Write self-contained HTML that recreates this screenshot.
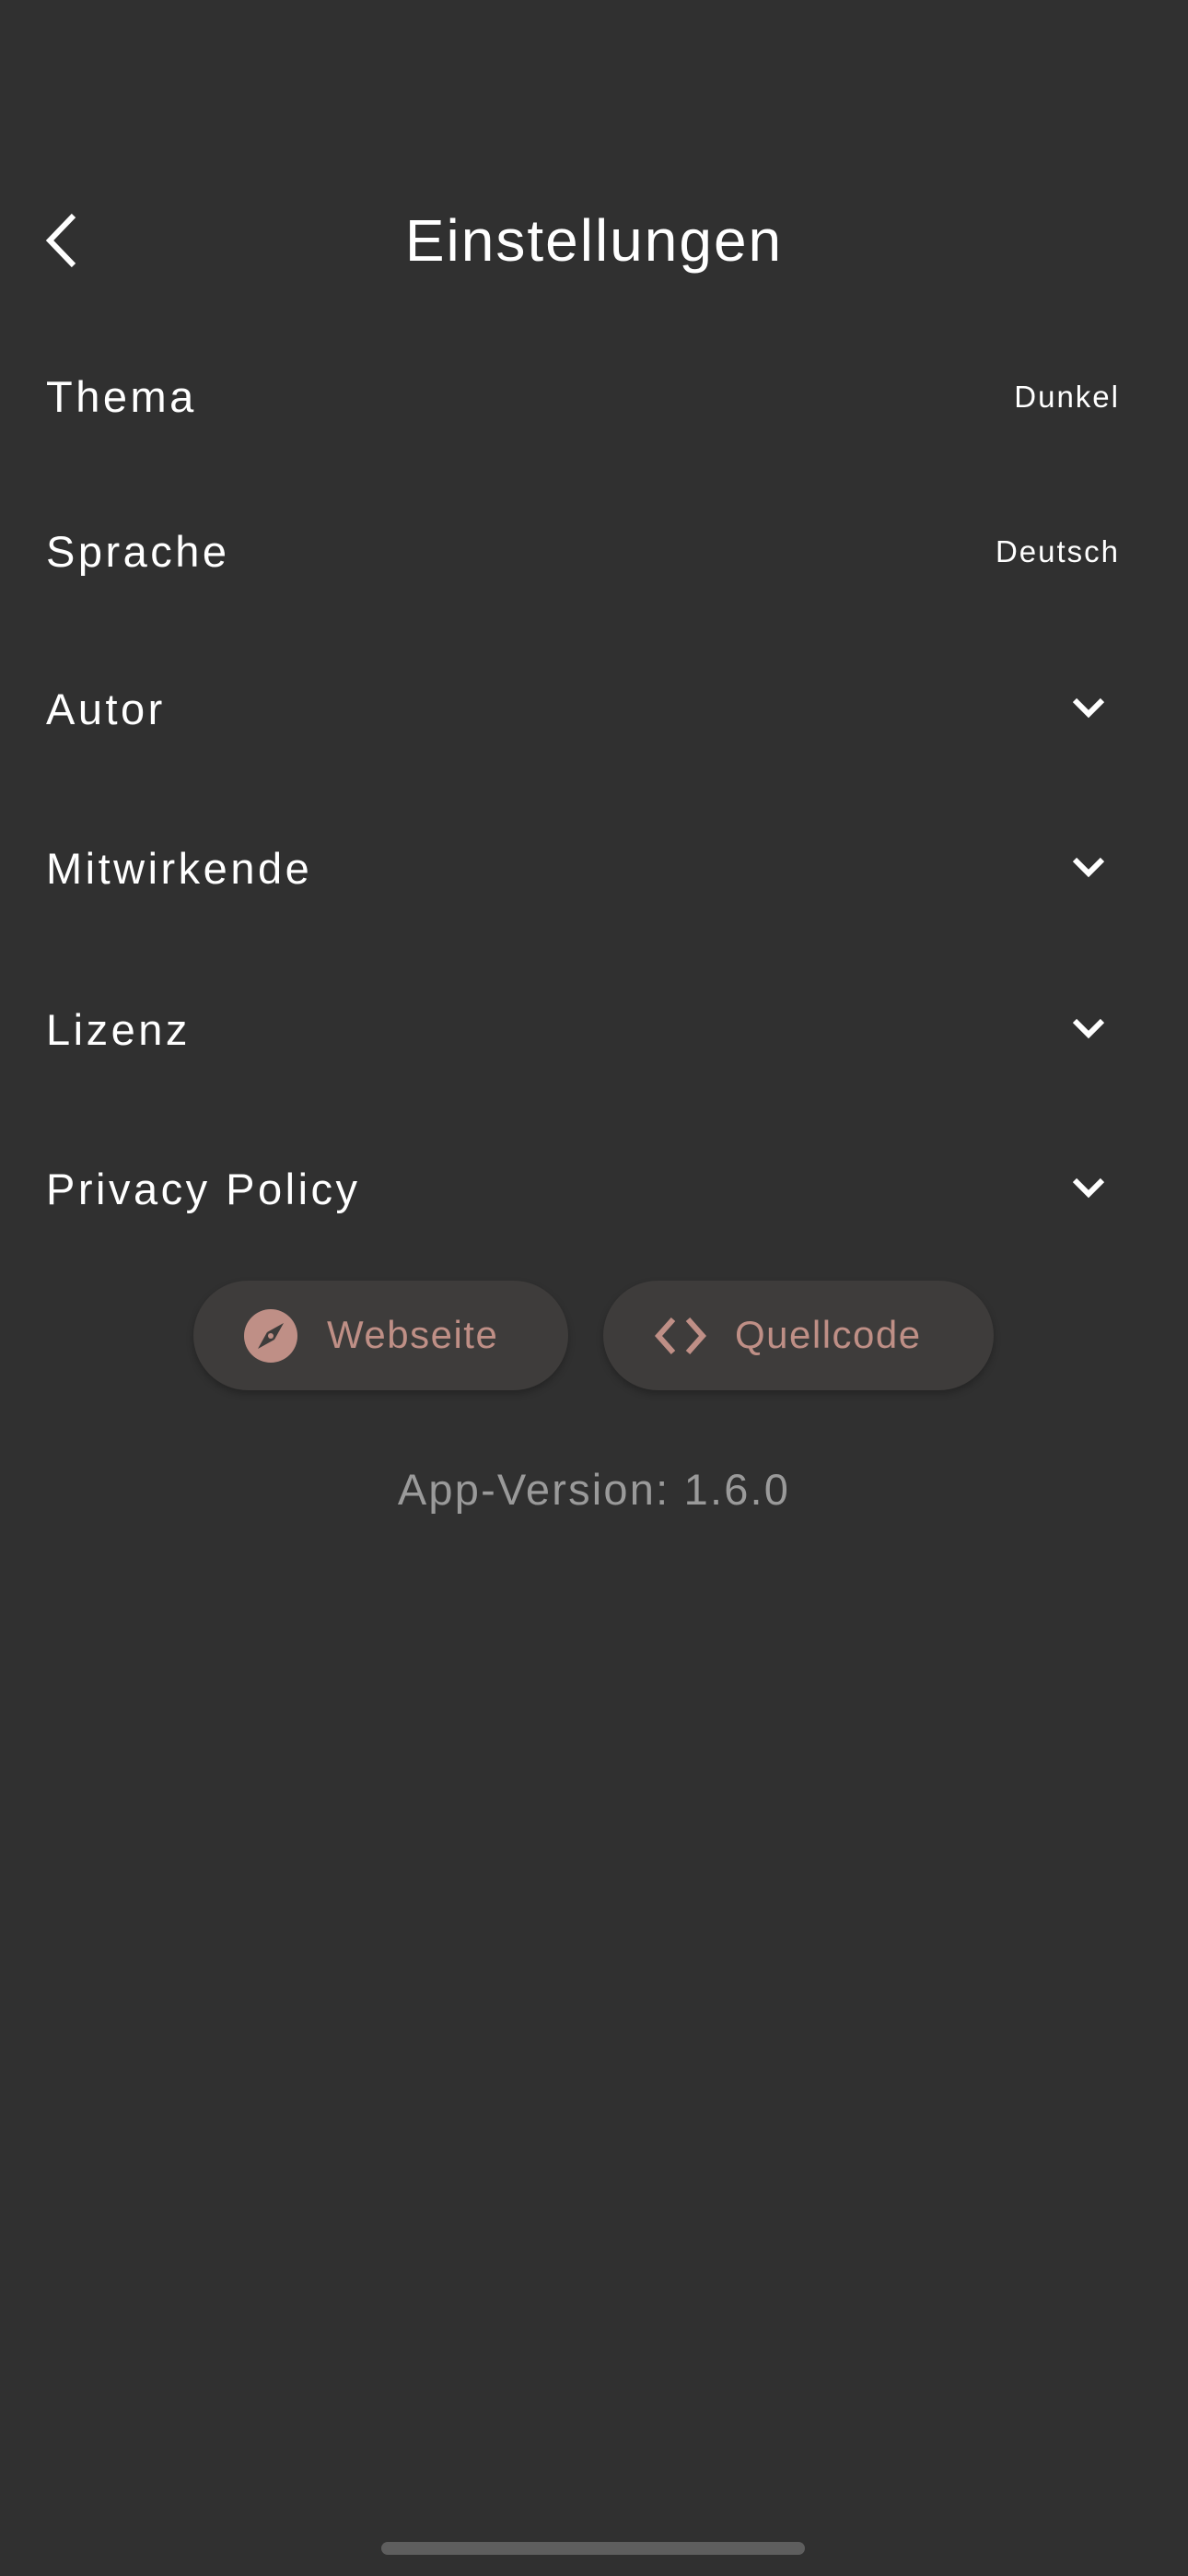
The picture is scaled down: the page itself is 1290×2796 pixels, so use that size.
<!DOCTYPE html>
<html><head><meta charset="utf-8"><style>
html,body{margin:0;padding:0;width:1290px;height:2796px;background:#303030;overflow:hidden;font-family:"Liberation Sans",sans-serif;color:#fff;}
.abs{position:absolute;}
.lbl{position:absolute;left:50px;font-size:47px;letter-spacing:3.5px;line-height:1;}
.val{position:absolute;right:74px;font-size:33px;letter-spacing:2px;line-height:1;}
.chev{position:absolute;left:1162px;width:40px;height:28px;}
.btn{position:absolute;top:1390px;height:119px;border-radius:60px;background:#3e3c3b;box-shadow:0 4px 8px rgba(0,0,0,.25);color:#bf8f86;font-size:42px;letter-spacing:1.5px;}
</style></head><body>
<svg class="abs" style="left:44px;top:230px" width="44" height="62" viewBox="0 0 44 62"><path d="M36 4 L10 31 L36 58" fill="none" stroke="#fff" stroke-width="6"/></svg>
<div class="abs" style="left:0;width:1290px;top:226px;text-align:center;font-size:64px;letter-spacing:2px;line-height:70px">Einstellungen</div>

<div class="lbl" style="top:407px">Thema</div><div class="val" style="top:414px">Dunkel</div>
<div class="lbl" style="top:575px">Sprache</div><div class="val" style="top:582px">Deutsch</div>
<div class="lbl" style="top:746px">Autor</div>
<div class="lbl" style="top:919px">Mitwirkende</div>
<div class="lbl" style="top:1094px">Lizenz</div>
<div class="lbl" style="top:1267px">Privacy Policy</div>
<svg class="chev" style="top:755px" viewBox="0 0 40 28"><path d="M5 5 L20 20 L35 5" fill="none" stroke="#fff" stroke-width="6"/></svg>
<svg class="chev" style="top:928px" viewBox="0 0 40 28"><path d="M5 5 L20 20 L35 5" fill="none" stroke="#fff" stroke-width="6"/></svg>
<svg class="chev" style="top:1103px" viewBox="0 0 40 28"><path d="M5 5 L20 20 L35 5" fill="none" stroke="#fff" stroke-width="6"/></svg>
<svg class="chev" style="top:1276px" viewBox="0 0 40 28"><path d="M5 5 L20 20 L35 5" fill="none" stroke="#fff" stroke-width="6"/></svg>

<div class="btn" style="left:210px;width:407px">
<svg class="abs" style="left:54px;top:30px" width="60" height="60" viewBox="0 0 60 60"><circle cx="30" cy="30" r="29" fill="#bf8f86"/><path d="M44 16 L34 34 L26 26 Z" fill="#3e3c3b"/><path d="M16 44 L26 26 L34 34 Z" fill="#3e3c3b"/><circle cx="30" cy="30" r="3" fill="#bf8f86"/></svg>
<div class="abs" style="left:145px;top:38px;line-height:1">Webseite</div></div>
<div class="btn" style="left:655px;width:424px">
<svg class="abs" style="left:52px;top:34px" width="64" height="52" viewBox="0 0 64 52"><path d="M24 8 L8 26 L24 44 M40 8 L56 26 L40 44" fill="none" stroke="#bf8f86" stroke-width="6"/></svg>
<div class="abs" style="left:143px;top:38px;line-height:1">Quellcode</div></div>

<div class="abs" style="left:0;width:1290px;top:1593px;text-align:center;font-size:47px;color:#9a9a9a;letter-spacing:2.2px;line-height:1">App-Version: 1.6.0</div>
<div class="abs" style="left:414px;top:2759px;width:460px;height:14px;border-radius:7px;background:#5e5e5e"></div>
</body></html>
